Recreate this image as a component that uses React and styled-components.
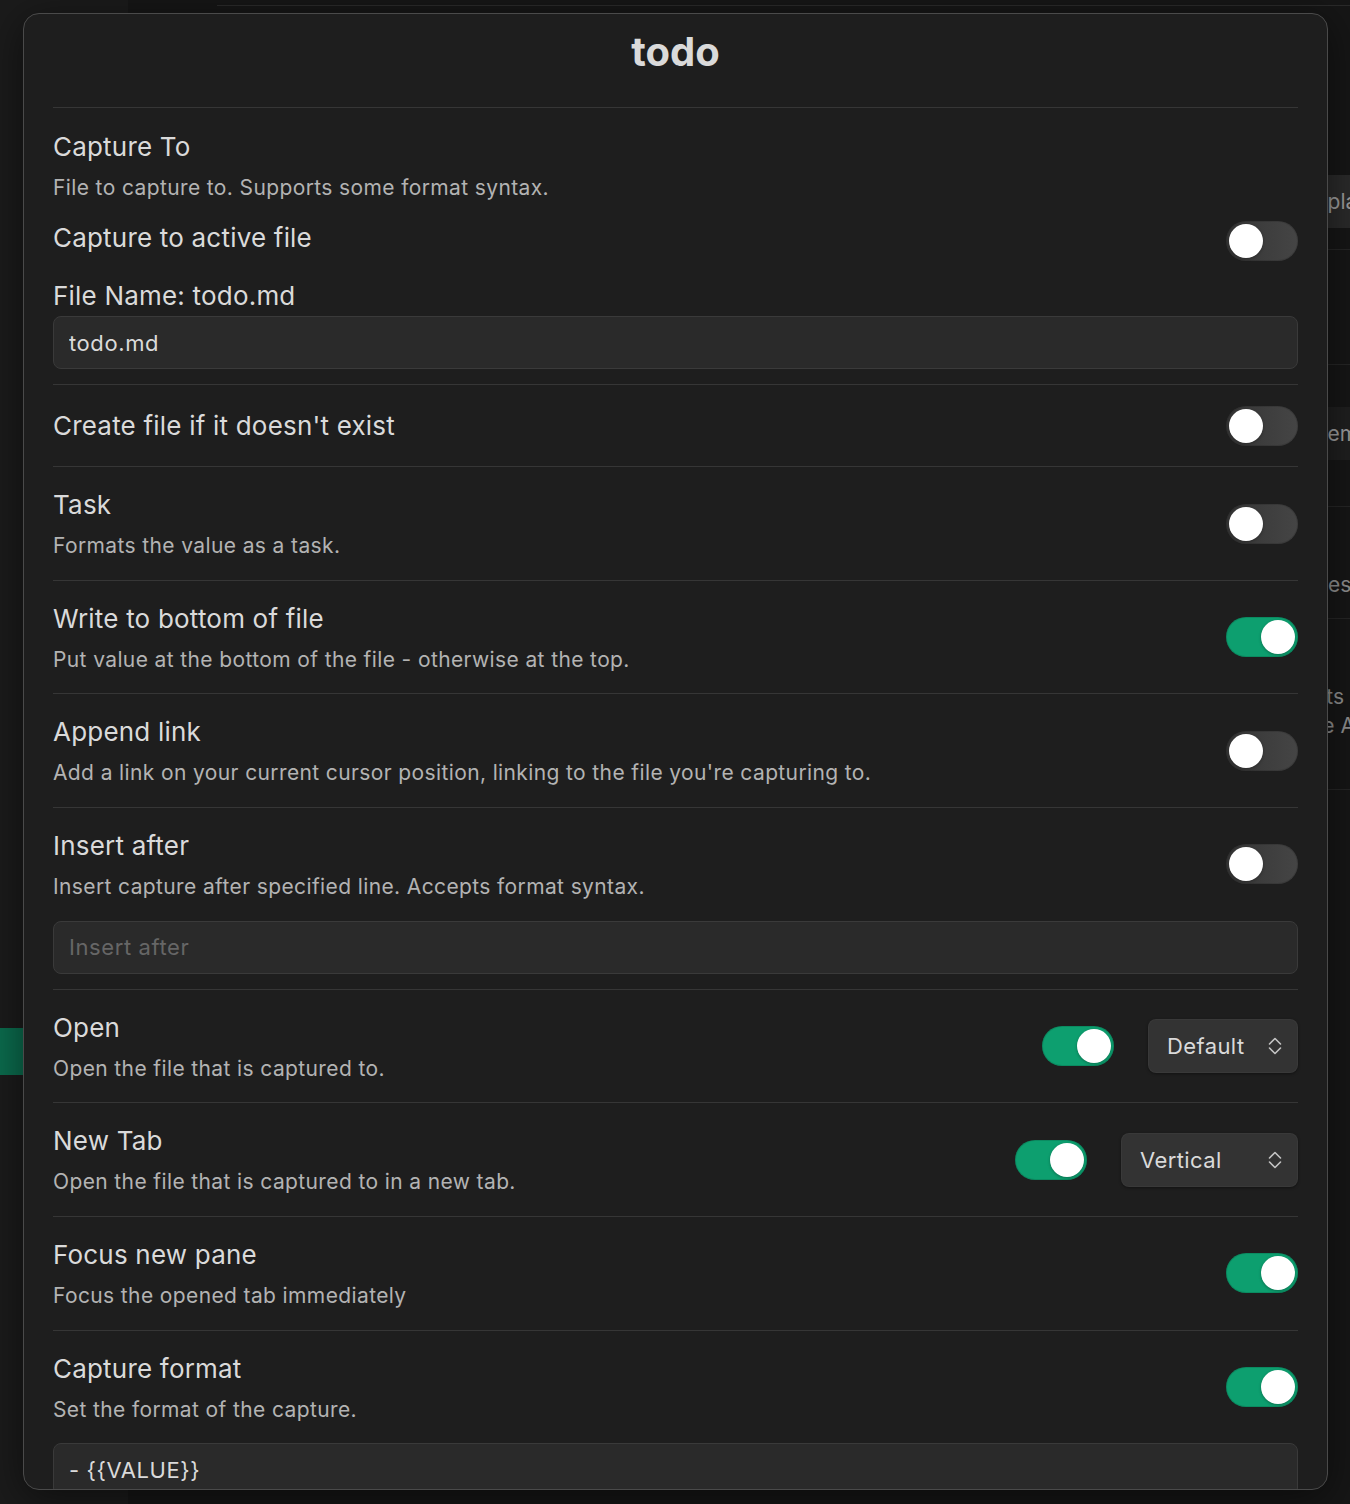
import React from 'react';
import styled, { createGlobalStyle } from 'styled-components';

const GlobalStyle = createGlobalStyle`
  html, body {
    margin: 0;
    padding: 0;
    background: #151515;
  }
  body {
    font-family: Inter, "Noto Sans", "Liberation Sans", sans-serif;
    -webkit-font-smoothing: antialiased;
    overflow: hidden;
  }
  * {
    box-sizing: border-box;
  }
`;

const Page = styled.div`
  position: relative;
  width: 1350px;
  height: 1504px;
  overflow: hidden;
`;

/* the dimmed app that sits behind the modal */
const Workspace = styled.div`
  display: flex;
  height: 100%;
`;

const Sidebar = styled.div`
  width: 128px;
  flex-shrink: 0;
  background: #1b1b1b;
  display: flex;
  flex-direction: column;
`;

const SidebarItem = styled.div`
  margin-top: 1028px;
  height: 47px;
  background: #0b6b4d;
`;

const Main = styled.div`
  flex: 1;
  min-width: 0;
  background: #161616;
  display: flex;
  flex-direction: column;
  overflow: hidden;
`;

const TopRule = styled.div`
  margin-left: 89px;
  height: 6px;
  border-bottom: 1px solid #2a2a2a;
`;

const BgPane = styled.div`
  margin-left: 1022px;
  width: 300px;
  flex-shrink: 0;
  display: flex;
  flex-direction: column;
`;

const BgRow = styled.div`
  height: ${p => p.$h}px;
  padding-top: ${p => p.$pt || 0}px;
  border-bottom: 1px solid #262626;
  display: flex;
  flex-direction: column;
`;

const BgButton = styled.div`
  margin-left: ${p => p.$x}px;
  height: 53px;
  padding: 0 16px;
  display: flex;
  align-items: center;
  align-self: flex-start;
  background: ${p => p.$bg || '#2a2a2a'};
  border-radius: 8px;
  font-size: 21px;
  color: #9c9c9c;
  white-space: nowrap;
`;

const BgText = styled.div`
  margin-left: ${p => p.$x}px;
  font-size: 21px;
  line-height: 29px;
  color: #8e8e8e;
  white-space: nowrap;
`;

/* modal */
const Modal = styled.div`
  position: absolute;
  top: 13px;
  left: 23px;
  width: 1305px;
  height: 1477px;
  padding: 14px 29px 0;
  background: #1e1e1e;
  border: 1px solid #4a4a4a;
  border-radius: 16px;
  box-shadow: 0 8px 40px rgba(0, 0, 0, 0.5);
  overflow: hidden;
`;

const Title = styled.h1`
  margin: 0 0 31px;
  text-align: center;
  font-size: 40px;
  line-height: 48px;
  font-weight: 700;
  color: #dadada;
`;

const Item = styled.div`
  border-top: 1px solid #363636;
  padding-bottom: ${p => (p.$withInput ? '15px' : '0')};
`;

const Block = styled.div`
  border-top: 1px solid #363636;
  padding: 22px 0 15px;
`;

const Row = styled.div`
  display: flex;
  align-items: center;
  gap: 34px;
  padding: ${p => (p.$single ? '21px 0 20px' : '21px 0 20.67px')};
`;

const InlineRow = styled.div`
  display: flex;
  align-items: flex-start;
  justify-content: space-between;
  margin-top: 20px;
  height: 40px;
`;

const Info = styled.div`
  flex: 1;
  min-width: 0;
`;

const Name = styled.div`
  font-size: 26px;
  line-height: 34px;
  letter-spacing: 0.2px;
  color: #dadada;
`;

const FieldLabel = styled(Name)`
  margin-top: 18px;
`;

const Desc = styled.div`
  margin-top: 11px;
  font-size: 21px;
  line-height: 26px;
  letter-spacing: 0.38px;
  color: #b3b3b3;
`;

const Controls = styled.div`
  display: flex;
  align-items: center;
  gap: 34px;
  flex-shrink: 0;
`;

const Toggle = styled.div`
  position: relative;
  flex-shrink: 0;
  width: 72px;
  height: 40px;
  border-radius: 20px;
  background: ${p => (p.$on ? '#0d9f6f' : 'linear-gradient(90deg, #353535, #454545)')};
  box-shadow: inset 0 0 0 1px rgba(0, 0, 0, 0.12);

  &::after {
    content: '';
    position: absolute;
    top: 3px;
    left: ${p => (p.$on ? '35px' : '3px')};
    width: 34px;
    height: 34px;
    border-radius: 50%;
    background: #fff;
    box-shadow: 0 1px 3px rgba(0, 0, 0, 0.3);
  }
`;

const SelectWrap = styled.div`
  position: relative;
  width: ${p => p.$w}px;
`;

const Select = styled.select`
  appearance: none;
  display: block;
  width: 100%;
  height: 54px;
  padding: 0 48px 0 19px;
  background: #333333;
  border: none;
  border-radius: 8px;
  box-shadow: 0 1px 3px rgba(0, 0, 0, 0.4), inset 0 0 0 1px rgba(255, 255, 255, 0.03);
  font-family: inherit;
  font-size: 22px;
  letter-spacing: 0.4px;
  color: #dadada;
  outline: none;
`;

const Chevron = styled.svg`
  position: absolute;
  right: 16px;
  top: 50%;
  transform: translateY(-50%);
  pointer-events: none;
`;

const TextInput = styled.input`
  display: block;
  width: 100%;
  height: 53px;
  margin-top: ${p => p.$mt || 0}px;
  padding: 0 15px;
  background: #2a2a2a;
  border: 1px solid #3a3a3a;
  border-radius: 8px;
  font-family: inherit;
  font-size: 22px;
  letter-spacing: 0.6px;
  color: #dadada;
  outline: none;

  &::placeholder {
    color: #666;
  }
`;

const Dropdown = ({ value, options, width }) => (
  <SelectWrap $w={width}>
    <Select defaultValue={value}>
      {options.map(o => (
        <option key={o}>{o}</option>
      ))}
    </Select>
    <Chevron width="14" height="18" viewBox="0 0 14 18" fill="none" stroke="#c4c4c4" strokeWidth="1.6" strokeLinecap="round" strokeLinejoin="round">
      <polyline points="1.5,7 7,1.5 12.5,7" />
      <polyline points="1.5,11 7,16.5 12.5,11" />
    </Chevron>
  </SelectWrap>
);

const settings = [
  { name: "Create file if it doesn't exist", on: false },
  { name: 'Task', desc: 'Formats the value as a task.', on: false },
  { name: 'Write to bottom of file', desc: 'Put value at the bottom of the file - otherwise at the top.', on: true },
  { name: 'Append link', desc: "Add a link on your current cursor position, linking to the file you're capturing to.", on: false },
  { name: 'Insert after', desc: 'Insert capture after specified line. Accepts format syntax.', on: false, input: { placeholder: 'Insert after' } },
  { name: 'Open', desc: 'Open the file that is captured to.', on: true, select: { value: 'Default', options: ['Default', 'Source', 'Preview'], width: 150 } },
  { name: 'New Tab', desc: 'Open the file that is captured to in a new tab.', on: true, select: { value: 'Vertical', options: ['Vertical', 'Horizontal'], width: 177 } },
  { name: 'Focus new pane', desc: 'Focus the opened tab immediately', on: true },
  { name: 'Capture format', desc: 'Set the format of the capture.', on: true, input: { value: '- {{VALUE}}' } },
];

const Setting = ({ name, desc, on, select, input }) => (
  <Item $withInput={!!input}>
    <Row $single={!desc}>
      <Info>
        <Name>{name}</Name>
        {desc && <Desc>{desc}</Desc>}
      </Info>
      <Controls>
        <Toggle $on={on} />
        {select && <Dropdown {...select} />}
      </Controls>
    </Row>
    {input && (
      <TextInput
        readOnly
        placeholder={input.placeholder}
        defaultValue={input.value}
      />
    )}
  </Item>
);

const App = () => (
  <Page>
    <GlobalStyle />
    <Workspace>
      <Sidebar>
        <SidebarItem />
      </Sidebar>
      <Main>
        <TopRule />
        <BgPane>
          <BgRow $h={244} $pt={169}>
            <BgButton $x={119}>Template</BgButton>
          </BgRow>
          <BgRow $h={115} />
          <BgRow $h={142} $pt={42}>
            <BgButton $x={149} $bg="#1f1f1f">Item</BgButton>
          </BgRow>
          <BgRow $h={112} $pt={63}>
            <BgText $x={160}>files.</BgText>
          </BgRow>
          <BgRow $h={171} $pt={63}>
            <BgText $x={112}>prompts</BgText>
            <BgText $x={153}>the API</BgText>
          </BgRow>
        </BgPane>
      </Main>
    </Workspace>

    <Modal>
      <Title>todo</Title>
      <Block>
        <Name>Capture To</Name>
        <Desc>File to capture to. Supports some format syntax.</Desc>
        <InlineRow>
          <Name>Capture to active file</Name>
          <Toggle />
        </InlineRow>
        <FieldLabel>File Name: todo.md</FieldLabel>
        <TextInput readOnly defaultValue="todo.md" $mt={3} />
      </Block>
      {settings.map(s => (
        <Setting key={s.name} {...s} />
      ))}
    </Modal>
  </Page>
);

export default App;
